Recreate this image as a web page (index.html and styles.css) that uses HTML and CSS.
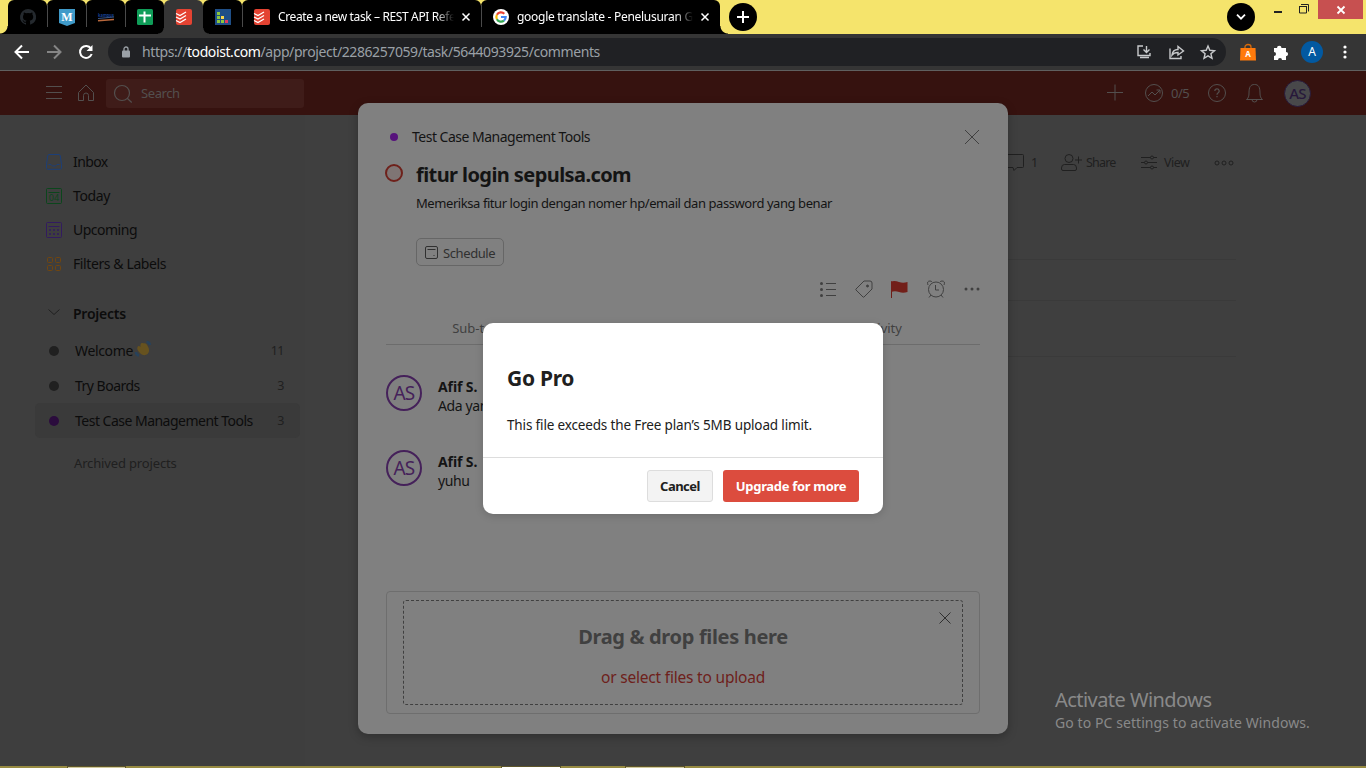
FILE: index.html
```html
<!DOCTYPE html>
<html lang="en">
<head>
<meta charset="utf-8">
<title>Todoist</title>
<link rel="stylesheet" href="styles.css">
</head>
<body>
<div class="tabs">
  <div class="tab first"><svg width="16" height="16" viewBox="0 0 16 16"><path fill="#24292e" d="M8 0a8 8 0 0 0-2.500 15.600c.4.100.5-.2.500-.4v-1.500c-2 .4-2.600-1-2.700-1.300-.3-.6-.6-.9-1-1.100.7-.3 1.300.2 1.700.9.5.8 1.300.7 2 .4.100-.5.300-.8.500-1C4.700 11.400 3 10.700 3 7.700c0-.9.300-1.600.8-2.100-.1-.2-.3-1 .1-2.100 0 0 .700-.2 2.200.8a7.600 7.600 0 0 1 4 0c1.500-1 2.200-.8 2.200-.8.4 1.100.1 1.900.1 2.100.5.600.8 1.300.8 2.100 0 3-1.800 3.700-3.600 3.900.300.300.5.800.5 1.500v2.100c0 .2.100.5.500.4A8 8 0 0 0 8 0z"/></svg></div>
  <div class="tab"><svg width="16" height="17" viewBox="0 0 16 17"><path fill="#3f9ac9" d="M0 0h16v14l-8 3-8-3z"/><text class="mletter" x="8" y="12" text-anchor="middle">M</text></svg></div>
  <div class="tab"><svg width="16" height="16" viewBox="0 0 16 16"><text class="tiny" x="0" y="8" textLength="16" lengthAdjust="spacingAndGlyphs">kampus</text><path d="M0 9.500 16 8" stroke="#3a5485" stroke-width="1"/><path d="M0 11.800 16 10.500" stroke="#b9683c" stroke-width="1.500"/></svg></div>
  <div class="tab"><svg width="16" height="16" viewBox="0 0 16 16"><rect width="16" height="16" rx="1.500" fill="#0f9d58"/><path d="M7.500 2.500v11M2 6.500h12" stroke="#fff" stroke-width="2"/></svg></div>
  <div class="tab active"><svg width="16" height="16" viewBox="0 0 16 16"><rect width="16" height="16" rx="2" fill="#e44332"/><path d="m0 4.500 4 2 6-3.500M0 8l4 2 6-3.500M0 11.500l4 2 6-3.500" fill="none" stroke="#fff" stroke-width="1.300"/></svg></div>
  <div class="tab next"><svg width="16" height="16" viewBox="0 0 16 16"><rect width="16" height="16" fill="#1f4f87"/><path fill="#8cc63f" d="M2 3h3v3H2zM2 7h3v3H2zM2 11h3v3H2zM6 11h3v3H6z"/><path fill="#fbd84b" d="M6 7h3v3H6z"/><path fill="#e23d5d" d="M10 11h3v3h-3z"/></svg></div>
  <div class="tab wide"><svg width="16" height="16" viewBox="0 0 16 16"><rect width="16" height="16" rx="2" fill="#e44332"/><path d="m0 4.500 4 2 6-3.500M0 8l4 2 6-3.500M0 11.500l4 2 6-3.500" fill="none" stroke="#fff" stroke-width="1.300"/></svg><span class="t1">Create a new task – REST API Refe</span><svg width="8" height="8" viewBox="0 0 8 8"><path d="m.5.5 7 7m0-7-7 7" stroke="#fff" stroke-width="1.500"/></svg></div>
  <div class="tab wide last"><svg width="16" height="16" viewBox="0 0 16 16"><circle cx="8" cy="8" r="8" fill="#fff"/><g fill="none" stroke-width="2.200"><path stroke="#ea4335" d="M11.300 4.700A4.700 4.700 0 0 0 3.900 5.800"/><path stroke="#fbbc05" d="M3.900 5.800a4.700 4.700 0 0 0 0 4.400"/><path stroke="#34a853" d="M3.900 10.200a4.700 4.700 0 0 0 7.100 1.400"/><path stroke="#4285f4" d="M11 11.600A4.600 4.600 0 0 0 12.700 8H8"/></g></svg><span class="t2">google translate - Penelusuran Go</span><svg width="8" height="8" viewBox="0 0 8 8"><path d="m.5.5 7 7m0-7-7 7" stroke="#fff" stroke-width="1.500"/></svg></div>
  <div class="round plus"><svg width="12" height="12" viewBox="0 0 12 12"><path d="M6 0v12M0 6h12" stroke="#fff" stroke-width="2"/></svg></div>
  <div class="round drop"><svg width="10" height="6" viewBox="0 0 10 6"><path d="m1 .700 4 4 4-4" stroke="#fff" stroke-width="1.800" fill="none"/></svg></div>
  <div class="win"><svg width="34" height="12" viewBox="0 0 34 12"><path d="M0 8h8" stroke="#222" stroke-width="2"/><path d="M25 2.500h8M25.500 2v7h7V2M27 .5h7.500v7" stroke="#222" fill="none"/></svg></div>
  <div class="close"><svg width="8" height="8" viewBox="0 0 8 8"><path d="m.5.5 7 7m0-7-7 7" stroke="#fff" stroke-width="1.800"/></svg></div>
</div>
<div class="toolbar">
  <svg class="nav" width="82" height="16" viewBox="0 0 82 16" fill="none" stroke-width="2"><path stroke="#fff" d="M15 8H2M8 1.500 1.500 8 8 14.500"/><path stroke="#858585" d="M33 8h13M40 1.500 46.500 8 40 14.500"/><path stroke="#fff" d="M77 4.500a6 6 0 1 0 .7 5.500"/><path fill="#fff" d="M78.500 1v6h-6z"/></svg>
  <div class="omni">
    <svg width="8" height="12" viewBox="0 0 8 12"><path d="M2 5V3a2 2 0 0 1 4 0v2" stroke="#9aa0a6" stroke-width="1.300" fill="none"/><rect y="4.500" width="8" height="7" rx="1" fill="#9aa0a6"/></svg>
    <span class="url">https://<b>todoist.com</b>/app/project/2286257059/task/5644093925/comments</span>
    <svg class="acts" width="79" height="16" viewBox="0 0 79 16" fill="none" stroke="#c8cacc" stroke-width="1.400"><path d="M7 2H2v9.500h12V9M4 13.500h9" /><path d="M10.500 2v6M7.500 5.500l3 3 3-3"/><path d="M34 4.500v10h11V12"/><path d="M36 11c.5-4 3-5.500 6-5.500V2.500l5.500 4.500-5.500 4V8.500c-3 0-4.500.5-6 2.500z"/><path d="m72 2 1.800 4.300 4.700.4-3.600 3 1.100 4.600-4-2.500-4 2.500 1.100-4.600-3.600-3 4.700-.4z"/></svg>
  </div>
  <svg class="bag" width="16" height="17" viewBox="0 0 16 17"><path d="M5 5V3a3 2.500 0 0 1 6 0v2" fill="none" stroke="#d56a0c" stroke-width="1.300"/><path d="M.5 4h15l.5 12.500H0z" fill="#ff7a0c"/><text class="bagtext" x="8" y="13" text-anchor="middle">A</text></svg>
  <svg class="puzzle" width="15" height="15" viewBox="0 0 15 15"><path fill="#fff" d="M4 3a2 2 0 0 1 4.500 0H13v4a2 2 0 0 1 0 4.200V15H9a2 2 0 0 0-4 0H1v-4a2 2 0 0 0 0-4V3z"/></svg>
  <div class="user">A</div>
  <svg class="kebab" width="4" height="14" viewBox="0 0 4 14" fill="#fff"><circle cx="2" cy="2" r="1.600"/><circle cx="2" cy="7" r="1.600"/><circle cx="2" cy="12" r="1.600"/></svg>
</div>
<header class="head">
  <svg class="hm" width="48" height="18" viewBox="0 0 48 18" fill="none" stroke="#534f4e"><path d="M0 2.500h16M0 8.500h16M0 14.500h16M32.500 8.500 40 1l7.500 7.500V16.500h-5v-5a2.500 2.500 0 0 0-5 0v5h-5z"/></svg>
  <div class="search"><svg width="19" height="19" viewBox="0 0 19 19" fill="none" stroke="#534f4e" stroke-width="1.200"><circle cx="8" cy="9" r="7.500"/><path d="m13.200 14.200 4.500 4.300"/></svg><span>Search</span></div>
  <svg class="hp" width="56" height="18" viewBox="0 0 56 18" fill="none" stroke="#534f4e"><path d="M0 8.500h16M8 .5v16"/><circle cx="47" cy="9" r="8.500"/><path d="m41 12 4-4 3 3 5-5m-3.500 0H53v3.500"/></svg>
  <span class="score">0/5</span>
  <svg class="hq" width="55" height="18" viewBox="0 0 55 18" fill="none" stroke="#534f4e"><circle cx="9" cy="9" r="8.500"/><path d="M6.800 7A2.200 2.200 0 1 1 10 9c-.7.400-1 .7-1 1.700M9 12v1.300" stroke-width="1.300"/><path d="M38.500 15.500h16c-2-1.500-2.500-3.500-2.500-6.500 0-6-1.500-8.500-5.500-8.500S41 3 41 9c0 3-.5 5-2.500 6.500zM44 15.500a2.500 2.500 0 0 0 5 0"/></svg>
  <div class="avatar small">AS</div>
</header>
<div class="body">
  <nav class="side">
    <div class="item"><svg width="16" height="16" viewBox="0 0 16 16" fill="none" stroke="#1c3f78"><path d="M3 .5h10l1.200.8 1.300 9v4l-1 1h-13l-1-1v-4l1.300-9zM2.500 10.500H5L6.500 12h3l1.500-1.500h2.500"/></svg><span class="n1">Inbox</span></div>
    <div class="item"><svg width="16" height="16" viewBox="0 0 16 16" fill="none" stroke="#0b461c"><rect x=".5" y=".5" width="15" height="15" rx="1"/><path d="M2.500 4.500h11"/><text class="daynum" x="8" y="13.300" text-anchor="middle">04</text></svg><span class="n2">Today</span></div>
    <div class="item"><svg width="16" height="16" viewBox="0 0 16 16" fill="none" stroke="#321b60"><rect x=".5" y=".5" width="15" height="15" rx="1"/><path d="M2.500 4.500h11"/><path d="M3 8h10M3 12h10" stroke-width="1.600" stroke-dasharray="2 2"/></svg><span class="n3">Upcoming</span></div>
    <div class="item"><svg width="16" height="16" viewBox="0 0 16 16" fill="none" stroke="#704610"><rect x="1.500" y="1.500" width="5" height="5" rx="1"/><rect x="9.500" y="1.500" width="5" height="5" rx="1"/><rect x="1.500" y="9.500" width="5" height="5" rx="1"/><rect x="9.500" y="9.500" width="5" height="5" rx="1"/></svg><span class="n4">Filters &amp; Labels</span></div>
    <div class="item group"><svg width="16" height="16" viewBox="0 0 16 16" fill="none" stroke="#202020"><path d="m2.500 3.500 5.500 5 5.500-5"/></svg><b>Projects</b></div>
    <div class="proj"><i class="dot"></i><span class="p1">Welcome</span><svg class="wave" width="16" height="16" viewBox="0 0 16 16"><path fill="#66521f" d="M2.500 6c.500-1.500 2-1 3 0C5 3 6 1.500 7.500 2S11 1.500 12 4c2 3 3 6 1 8.500-2.500 2.500-6 2-8-.5-2-2-3.500-4-2.500-6z"/><path d="M11.500 1q3 0 3.500 3M1 11q0 3 3 3.500" fill="none" stroke="#27425b" stroke-width="2.500"/></svg><em>11</em></div>
    <div class="proj"><i class="dot"></i><span class="p2">Try Boards</span><em>3</em></div>
    <div class="proj sel"><i class="dot violet"></i><span class="p3">Test Case Management Tools</span><em>3</em></div>
    <div class="archived">Archived projects</div>
  </nav>
  <main class="main">
    <div class="viewbar">
      <svg width="24" height="18" viewBox="0 0 24 18" fill="none" stroke="#202020"><path d="M1 .5h21.500q1 0 1 1v11q0 1-1 1H17l-3 3-1-3H1"/></svg><span class="v1">1</span>
      <svg class="person" width="22" height="18" viewBox="0 0 22 18" fill="none" stroke="#202020"><circle cx="8" cy="4.500" r="4"/><path d="M.5 14q0-3.500 3-3.500h9q3 0 3 3.500v1q0 1.500-1.500 1.500H2Q.5 16.500.5 15zM14 6h7M17.500 2.500v7"/></svg><span class="v2">Share</span>
      <svg class="sliders" width="16" height="14" viewBox="0 0 16 14" fill="none" stroke="#202020"><path d="M0 1.500h9.500m3 0H16M0 6.500h3.500m3 0H16M0 11.500h9.500m3 0H16"/><circle cx="11" cy="1.500" r="1.500"/><circle cx="5" cy="6.500" r="1.500"/><circle cx="11" cy="11.500" r="1.500"/></svg><span class="v3">View</span>
      <svg class="more" width="20" height="6" viewBox="0 0 20 6" fill="none" stroke="#202020"><circle cx="3" cy="3" r="2"/><circle cx="10" cy="3" r="2"/><circle cx="17" cy="3" r="2"/></svg>
    </div>
    <div class="rows"><div></div><div></div><div></div></div>
  </main>
</div>
<div class="taskbar"><i></i><i></i><i></i></div>

<section class="task">
  <div class="crumb"><i class="dot"></i><span>Test Case Management Tools</span><svg width="16" height="16" viewBox="0 0 16 16"><path d="m1 1 14 14M15 1 1 15" stroke="#404040"/></svg></div>
  <div class="title"><i class="check"></i><h1>fitur login sepulsa.com</h1></div>
  <p class="desc">Memeriksa fitur login dengan nomer hp/email dan password yang benar</p>
  <div class="sched"><svg width="13" height="13" viewBox="0 0 13 13" fill="none" stroke="#303030"><rect x=".5" y=".5" width="12" height="12" rx="1.500"/><path d="M2.500 3.500h8M8.500 9.500h1"/></svg><span>Schedule</span></div>
  <div class="tools">
    <svg width="17" height="16" viewBox="0 0 17 16" fill="none" stroke="#404040"><path d="M6 2.500h10M6 8.500h10M6 14.500h10"/><g fill="#404040" stroke="none"><circle cx="1.500" cy="2.500" r="1.500"/><circle cx="1.500" cy="8.500" r="1.500"/><circle cx="1.500" cy="14.500" r="1.500"/></g></svg>
    <svg width="18" height="18" viewBox="0 0 18 18" fill="none" stroke="#404040"><path d="M9 1h6q2 0 2 2v6l-8 8q-.500.500-1 0L1 10Q.5 9.500 1 9z"/><circle cx="12.500" cy="6" r="1" fill="#404040"/></svg>
    <svg width="17" height="17" viewBox="0 0 17 17"><path d="M.5.500V17" stroke="#6b1d17"/><path fill="#721f19" d="M0 .500q4-1 8 .5t8.500 0v10q-4.500 1.500-8.500 0t-8 0z"/></svg>
    <svg width="18" height="18" viewBox="0 0 18 18" fill="none" stroke="#404040"><circle cx="9" cy="9.500" r="7.500"/><path d="M8.500 5v5H12M4 15l-2 2.500M14 15l2 2.500M1 5Q-.5 1 3 1q1.500 0 2 1M17 5q1.500-4-2-4-1.500 0-2 1"/></svg>
    <svg width="16" height="4" viewBox="0 0 16 4" fill="#404040"><circle cx="2" cy="2" r="1.500"/><circle cx="8" cy="2" r="1.500"/><circle cx="14" cy="2" r="1.500"/></svg>
  </div>
  <div class="subtabs"><span class="s1">Sub-tasks</span><span class="s2">Comments</span><span class="s3">Activity</span></div>
  <div class="comment"><div class="avatar">AS</div><div><b>Afif S.</b><p class="c1">Ada yang</p></div></div>
  <div class="comment second"><div class="avatar">AS</div><div><b>Afif S.</b><p class="c2">yuhu</p></div></div>
  <div class="drop-box"><div class="drop-zone"><svg width="12" height="12" viewBox="0 0 12 12"><path d="m.5.5 11 11m0-11-11 11" stroke="#303030"/></svg><h2>Drag &amp; drop files here</h2><a>or select files to upload</a></div></div>
</section>

<section class="dialog">
  <h2>Go Pro</h2>
  <p>This file exceeds the Free plan’s 5MB upload limit.</p>
  <footer><button class="cancel"><span>Cancel</span></button><button class="upgrade"><span>Upgrade for more</span></button></footer>
</section>
<aside class="activate"><div>Activate Windows</div><p>Go to PC settings to activate Windows.</p></aside>
</body>
</html>
```
FILE: styles.css
```css
* { box-sizing: border-box; margin: 0; padding: 0; }
body { width: 1366px; height: 768px; overflow: hidden; position: relative; display: flex; flex-direction: column; background: #3f3f3f; font: 14px/20px "Noto Sans", "Open Sans", sans-serif; white-space: nowrap; }
svg { display: block; flex: none; overflow: visible; }
i, em { font-style: normal; }

.tabs { height: 34px; flex: none; display: flex; background: #f5e46c; padding-left: 8px; }
.tab { position: relative; width: 39px; height: 34px; background: #000; border-radius: 6px 6px 0 0; display: flex; align-items: center; padding-left: 12px; flex: none; }
.tab::after { content: ""; position: absolute; right: -1px; top: 5px; width: 1px; height: 22px; background: #4a4a4a; z-index: 1; }
.tab.first::before { content: ""; position: absolute; left: -8px; bottom: 0; width: 8px; height: 8px; background: radial-gradient(circle at 0 0, transparent 7px, #000 8px); }
.tab.last::after { right: -8px; top: auto; bottom: 0; width: 8px; height: 8px; background: radial-gradient(circle at 100% 0, transparent 7px, #000 8px); }
.tab.active { background: #353535; z-index: 2; }
.tab.active::before { content: ""; position: absolute; left: -6px; bottom: 0; width: 6px; height: 6px; background: radial-gradient(circle at 0 0, transparent 5px, #353535 6px); }
.tab.active::after { right: -6px; top: auto; bottom: 0; width: 6px; height: 6px; background: radial-gradient(circle at 100% 0, transparent 5px, #353535 6px); }
.tab.wide { width: 239px; color: #fff; font-size: 12px; }
.tab.wide span { margin-left: 8px; width: 176px; overflow: hidden; -webkit-mask-image: linear-gradient(90deg, #000 158px, transparent 176px); mask-image: linear-gradient(90deg, #000 158px, transparent 176px); margin-right: 8px; }
.tab .t1 { letter-spacing: -.37px; }
.tab .t2 { letter-spacing: -.28px; }
.mletter { font: bold 12px "Liberation Serif", serif; fill: #fff; }
.tiny { font: bold 6px "Noto Sans", sans-serif; fill: #164096; }
.round { width: 28px; height: 28px; margin-top: 3px; border-radius: 50%; background: #000; display: flex; align-items: center; justify-content: center; }
.plus { margin-left: 9px; }
.drop { margin-left: 470px; }
.win { margin: 4px 0 0 19px; width: 44px; }
.close { width: 45px; height: 19px; background: #c75050; display: flex; align-items: center; justify-content: center; }

.toolbar { height: 37px; flex: none; background: #353535; border-bottom: 1px solid #606060; display: flex; align-items: center; }
.nav { margin-left: 14px; }
.omni { margin-left: 12px; width: 1118px; height: 28px; border-radius: 14px; background: #202124; display: flex; align-items: center; padding-left: 14px; color: #9aa0a6; }
.url { margin-left: 12px; letter-spacing: -.41px; }
.url b { color: #fff; font-weight: 400; }
.acts { margin-left: auto; margin-right: 11px; }
.bag { margin-left: 14px; }
.bagtext { font: bold 8px "Noto Sans", sans-serif; fill: #fff; }
.puzzle { margin-left: 17px; }
.user { width: 22px; height: 22px; margin-left: 13px; border-radius: 50%; background: #0259a1; color: #fff; font-size: 12px; line-height: 22px; text-align: center; }
.kebab { margin-left: 20px; }

.head { height: 44px; flex: none; background: #36120f; display: flex; align-items: center; color: #534f4e; font-size: 13px; }
.hm { margin-left: 46px; }
.search { width: 198px; height: 29px; margin-left: 12px; border-radius: 3px; background: #3f1c19; display: flex; align-items: center; padding-left: 8px; font-size: 13px; }
.search span { margin-left: 8px; letter-spacing: -.4px; }
.hp { margin-left: 803px; }
.score { margin-left: 8px; width: 18px; letter-spacing: -.5px; }
.hq { margin-left: 19px; }
.avatar { width: 36px; height: 36px; border: 2px solid #45215a; border-radius: 50%; color: #45215a; text-align: center; font-size: 19px; line-height: 32px; flex: none; letter-spacing: -.9px; }
.avatar.small { width: 27px; height: 27px; font-size: 15px; line-height: 24px; margin-left: 21px; background: #48484a; border: 1px solid #281a3b; color: #27183a; font-weight: 500; }

.body { flex: 1; display: flex; min-height: 0; color: #0c0c0c; }
.side { width: 305px; background: #3e3e3e; padding-top: 30px; }
.item { height: 34px; display: flex; align-items: center; padding-left: 46px; }
.item span, .item b { margin-left: 11px; letter-spacing: -.4px; }
.daynum { font: 9px "Noto Sans", sans-serif; fill: #0b461c; stroke: none; }
.item .n1 { letter-spacing: -.6px; }
.item .n3 { letter-spacing: -.5px; }
.group { margin-top: 16px; }
.item.group b { letter-spacing: -.25px; font-weight: 600; }
.proj { height: 35px; margin: 0 5px 0 35px; padding: 0 16px 0 14px; display: flex; align-items: center; }
.group + .proj { margin-top: 2px; }
.proj.sel { background: #3a3a3a; border-radius: 5px; }
.proj span { margin-left: 16px; letter-spacing: -.51px; }
.proj .p1 { letter-spacing: -.35px; }
.proj em { margin-left: auto; color: #202020; font-size: 12.500px; letter-spacing: -.5px; }
.dot { width: 10px; height: 10px; border-radius: 50%; background: #202020; flex: none; }
.violet { background: #2b0c3d; }
.wave { margin: -4px 0 0 2px; }
.archived { margin: 15px 0 0 74px; color: #202020; font-size: 13px; letter-spacing: -.15px; }
.main { flex: 1; color: #202020; }
.viewbar { display: flex; align-items: center; height: 20px; margin: 38px 0 0 695px; font-size: 12.500px; }
.v1 { margin-left: 7px; width: 6px; }
.person { margin-left: 24px; }
.v2 { margin-left: 3px; width: 30px; letter-spacing: -.8px; }
.sliders { margin-left: 25px; }
.v3 { margin-left: 7px; width: 27px; letter-spacing: -.5px; }
.more { margin-left: 23px; }
.rows { margin: 86px 0 0 702px; width: 229px; }
.rows div { height: 41px; border-top: 1px solid #3a3a3a; }
.rows div + div { height: 56px; }
.taskbar { height: 2px; flex: none; background: #978b42; display: flex; }
.taskbar i { width: 59px; border-left: 1px solid #5d552a; border-right: 1px solid #5d552a; border-top: 1px solid #5d552a; background: #d0c89a; }
.taskbar i:nth-child(1) { margin-left: 67px; }
.taskbar i:nth-child(2) { margin-left: 375px; width: 60px; background: #fff; }
.taskbar i:nth-child(3) { margin-left: 64px; width: 60px; }

.task { position: absolute; left: 358px; top: 103px; width: 650px; height: 631px; border-radius: 10px; background: #808080; box-shadow: 0 3px 10px rgba(0,0,0,.25); color: #141414; padding: 24px 28px 0; }
.crumb { display: flex; align-items: center; height: 20px; padding-left: 4px; }
.crumb .dot { width: 8px; height: 8px; background: #57137c; }
.crumb span { margin-left: 14px; letter-spacing: -.5px; }
.crumb svg { margin-left: auto; }
.title { display: flex; margin: 15px 0 0 -1px; }
.check { width: 18px; height: 18px; margin-top: 2px; border: 2px solid #6e211b; border-radius: 50%; background: #7f7574; }
h1 { margin-left: 13px; font-size: 20px; line-height: 26px; font-weight: 700; letter-spacing: -.58px; }
.desc { margin: 5px 0 0 30px; font-size: 13px; line-height: 20px; letter-spacing: -.43px; }
.sched { margin: 25px 0 0 30px; width: 88px; height: 28px; border: 1px solid #666; border-radius: 5px; display: flex; align-items: center; padding-left: 8px; color: #303030; font-size: 13px; }
.sched span { margin: 2px 0 0 5px; letter-spacing: -.4px; }
.tools { display: flex; align-items: center; height: 18px; margin: 14px 0 0 434px; gap: 18px; }
.tools svg:nth-child(4) { margin-left: 1px; }
.tools svg:last-child { margin-left: 1px; }
.subtabs { display: grid; grid-template-columns: repeat(3, 1fr); height: 36px; margin-top: 11px; padding-top: 9px; text-align: center; font-size: 13px; color: #404040; line-height: 20px; border-bottom: 1px solid #6c6c6c; }
.subtabs .s1 { margin-left: -7px; }
.subtabs .s3 { margin-left: -2px; }
.comment { display: flex; height: 40px; margin-top: 30px; gap: 16px; }
.second { margin-top: 35px; }
.comment > div:last-child { padding-top: 2px; line-height: 20px; }
.comment b { display: block; font-weight: 700; letter-spacing: -.1px; }
.comment p { line-height: 18px; letter-spacing: -.4px; }
.drop-box { margin-top: 101px; width: 594px; height: 123px; border: 1px solid #6e6e6e; border-radius: 4px; padding: 8px 16px; }
.drop-zone { position: relative; height: 105px; border: 1px dashed #404040; border-radius: 3px; text-align: center; color: #404040; padding-top: 22px; }
.drop-zone svg { position: absolute; right: 11px; top: 11px; }
.drop-zone h2 { font-size: 20px; line-height: 28px; letter-spacing: -.33px; }
.drop-zone a { display: block; margin-top: 14px; font-size: 15.500px; line-height: 24px; color: #6e211b; letter-spacing: -.2px; }

.dialog { position: absolute; left: 483px; top: 323px; width: 400px; height: 191px; border-radius: 10px; background: #fff; box-shadow: 0 2px 8px rgba(0,0,0,.16); color: #202020; padding-top: 40px; }
.dialog h2 { margin-left: 24px; font-size: 21px; line-height: 30px; letter-spacing: -.3px; }
.dialog p { margin: 22px 0 0 24px; font-size: 13.500px; line-height: 20px; letter-spacing: -.15px; }
.dialog footer { margin-top: 22px; border-top: 1px solid #ddd; padding: 12px 24px 0; display: flex; justify-content: flex-end; gap: 10px; }
button { height: 32px; border-radius: 3px; font: bold 13px/18px "Noto Sans", sans-serif; white-space: nowrap; border: 0; }
.cancel { width: 66px; background: #f3f3f3; border: 1px solid #ddd; color: #202020; letter-spacing: -.5px; }
.upgrade { width: 136px; background: #dc4c3e; color: #fff; letter-spacing: -.32px; }
.activate { position: absolute; left: 1055px; top: 686px; color: #898989; font-size: 14px; }
.activate div { font-size: 20px; line-height: 28px; letter-spacing: -.55px; }
.activate p { line-height: 18px; letter-spacing: .08px; }
```
